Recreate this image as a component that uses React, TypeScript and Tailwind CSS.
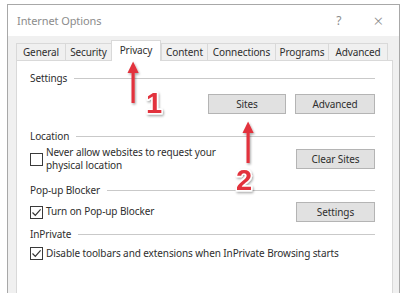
import React from "react";

const Heading = ({ label }: { label: string }) => (
  <div className="flex items-center h-[14px]">
    <span>{label}</span>
    <div className="flex-1 h-px bg-[#c9c9c9] ml-[7px]" />
  </div>
);

const Box = ({ checked }: { checked?: boolean }) => (
  <div className="w-[13px] h-[13px] border border-[#3a3a3a] bg-white shrink-0 flex items-center justify-center">
    {checked && (
      <svg width="11" height="11" viewBox="0 0 11 11">
        <path d="M1.5 5.5 L4.3 8.3 L9.6 2.4" fill="none" stroke="#333" strokeWidth="1.2" />
      </svg>
    )}
  </div>
);

const Btn = ({ label, w }: { label: string; w: string }) => (
  <div className={`${w} h-[20px] bg-[#e1e1e1] border border-[#b4b4b4] flex items-center justify-center`}>
    {label}
  </div>
);

const tabs: { label: string; w: string; sel?: boolean }[] = [
  { label: "General", w: "w-[49px]" },
  { label: "Security", w: "w-[46px]" },
  { label: "Privacy", w: "w-[50px]", sel: true },
  { label: "Content", w: "w-[46px]" },
  { label: "Connections", w: "w-[68px]" },
  { label: "Programs", w: "w-[53px]" },
  { label: "Advanced", w: "w-[60px]" },
];

export default function App() {
  return (
    <div
      className="relative w-[405px] h-[307px] bg-white overflow-hidden text-[10px] tracking-[-0.1px] text-[#2e2e2e] leading-none"
      style={{ fontFamily: '"Noto Sans", "Open Sans", sans-serif' }}
    >
      <div className="ml-[7px] mt-[4px] w-[393px] h-[289px] border-x border-t border-[#a8a8a8] flex flex-col">
        <div className="h-[31px] bg-white flex items-center pl-[9px] pr-[16px] shrink-0">
          <span className="text-[11px] text-[#8c8c8c]">Internet Options</span>
          <span className="ml-auto text-[12px] text-[#8c8c8c]">?</span>
          <span className="ml-[32px] text-[17px] font-light text-[#8c8c8c]">×</span>
        </div>
        <div className="flex-1 bg-[#f0f0f0] pl-[8px] pr-[6px] pt-[4px] flex flex-col">
          <div className="flex items-end h-[20px] relative z-10">
            {tabs.map((t) =>
              t.sel ? (
                <div
                  key={t.label}
                  className={`${t.w} h-[21px] -mb-px bg-white border-x border-t border-[#d9d9d9] flex items-center justify-center pb-[3px]`}
                >
                  {t.label}
                </div>
              ) : (
                <div
                  key={t.label}
                  className={`${t.w} h-[17px] bg-[#f0f0f0] border-l border-t border-[#d9d9d9] last:border-r flex items-center justify-center`}
                >
                  {t.label}
                </div>
              )
            )}
          </div>
          <div className="flex-1 bg-white border-x border-t border-[#d9d9d9] pl-[13px] pr-[17px] pt-[10px] flex flex-col">
            <Heading label="Settings" />
            <div className="mt-[9px] flex justify-end gap-[9px]">
              <Btn label="Sites" w="w-[78px]" />
              <Btn label="Advanced" w="w-[80px]" />
            </div>
            <div className="mt-[15px]">
              <Heading label="Location" />
            </div>
            <div className="mt-[4px] h-[24px] flex items-center">
              <Box />
              <div className="ml-[3px] leading-[13px]">
                <div>Never allow websites to request your</div>
                <div>physical location</div>
              </div>
              <div className="ml-auto">
                <Btn label="Clear Sites" w="w-[79px]" />
              </div>
            </div>
            <div className="mt-[12px]">
              <Heading label="Pop-up Blocker" />
            </div>
            <div className="mt-[5px] h-[20px] flex items-center">
              <Box checked />
              <span className="ml-[3px] -mt-[3px]">Turn on Pop-up Blocker</span>
              <div className="ml-auto">
                <Btn label="Settings" w="w-[79px]" />
              </div>
            </div>
            <div className="mt-[5px]">
              <Heading label="InPrivate" />
            </div>
            <div className="mt-[5px] h-[14px] flex items-center">
              <Box checked />
              <span className="ml-[3px]">Disable toolbars and extensions when InPrivate Browsing starts</span>
            </div>
          </div>
        </div>
      </div>

      <svg className="absolute inset-0 pointer-events-none" width="405" height="307" viewBox="0 0 405 307">
        <defs>
          <filter id="sh" x="-50%" y="-50%" width="200%" height="200%">
            <feDropShadow dx="1" dy="1.5" stdDeviation="1.2" floodColor="#000" floodOpacity="0.35" />
          </filter>
        </defs>
        <g fill="#e2323c" filter="url(#sh)">
          <rect x="131.5" y="70" width="3.2" height="33" />
          <polygon points="127.5,73 133.1,61.5 138.7,73" />
          <rect x="246.5" y="130" width="3.2" height="33" />
          <polygon points="242.5,133 248.1,121.5 253.7,133" />
        </g>
        <g
          fontFamily='"Liberation Sans", Arial, sans-serif'
          fontSize="29"
          fontWeight="600"
          fill="#e2323c"
          stroke="#ffffff"
          strokeWidth="3"
          strokeLinejoin="round"
          filter="url(#sh)"
          style={{ paintOrder: "stroke" }}
        >
          <text x="146" y="113">1</text>
          <text x="236" y="190">2</text>
        </g>
      </svg>
    </div>
  );
}
